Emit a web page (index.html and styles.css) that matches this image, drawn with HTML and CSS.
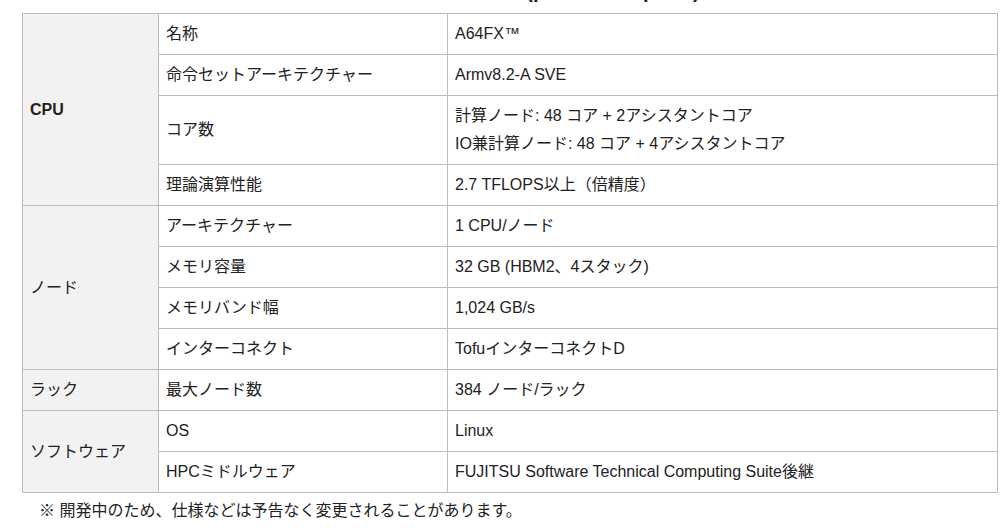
FILE: index.html
```html
<!DOCTYPE html>
<html lang="ja">
<head>
<meta charset="utf-8">
<title>主な仕様</title>
<link rel="stylesheet" href="styles.css">
</head>
<body>
<h2 class="title">スーパーコンピュータ (post-K computer) の主な仕様</h2>
<table class="spec">
  <colgroup>
    <col class="c1"><col class="c2"><col class="c3">
  </colgroup>
  <tbody>
    <tr><th rowspan="4">CPU</th><td>名称</td><td>A64FX™</td></tr>
    <tr><td>命令セットアーキテクチャー</td><td>Armv8.2-A SVE</td></tr>
    <tr><td>コア数</td><td>計算ノード: 48 コア + 2アシスタントコア<br>IO兼計算ノード: 48 コア + 4アシスタントコア</td></tr>
    <tr><td>理論演算性能</td><td>2.7 TFLOPS以上（倍精度）</td></tr>
    <tr><th rowspan="4" class="jp">ノード</th><td>アーキテクチャー</td><td>1 CPU/ノード</td></tr>
    <tr><td>メモリ容量</td><td>32 GB (HBM2、4スタック)</td></tr>
    <tr><td>メモリバンド幅</td><td>1,024 GB/s</td></tr>
    <tr><td>インターコネクト</td><td>TofuインターコネクトD</td></tr>
    <tr><th class="jp">ラック</th><td>最大ノード数</td><td>384 ノード/ラック</td></tr>
    <tr><th rowspan="2" class="jp">ソフトウェア</th><td>OS</td><td>Linux</td></tr>
    <tr><td>HPCミドルウェア</td><td>FUJITSU Software Technical Computing Suite後継</td></tr>
  </tbody>
</table>
<p class="note">※ 開発中のため、仕様などは予告なく変更されることがあります。</p>
</body>
</html>
```

FILE: styles.css
```css
html, body {
  margin: 0;
  padding: 0;
  background: #fff;
}
body {
  font-family: "Liberation Sans", Arial, "Noto Sans CJK JP", sans-serif;
  font-size: 16px;
  color: #222;
  overflow: hidden;
}
.title {
  margin: -21px 0 10px 0;
  padding-left: 120px;
  font-size: 20px;
  line-height: 24px;
  font-weight: bold;
  text-align: center;
  color: #222;
}
.spec {
  margin-left: 22px;
  width: 976px;
  border-collapse: collapse;
  table-layout: fixed;
}
.c1 { width: 136px; }
.c2 { width: 289px; }
.c3 { width: auto; }
.spec th, .spec td {
  border: 1px solid #bcbcbc;
  padding: 6px 7px;
  line-height: 28px;
  text-align: left;
  vertical-align: middle;
  font-weight: normal;
}
.spec th {
  background: #f2f2f2;
  font-weight: bold;
  padding-left: 7px;
}
.spec th.jp {
  font-weight: normal;
}
.note {
  margin: 4px 0 0 39px;
  line-height: 28px;
  font-size: 16px;
}
```
